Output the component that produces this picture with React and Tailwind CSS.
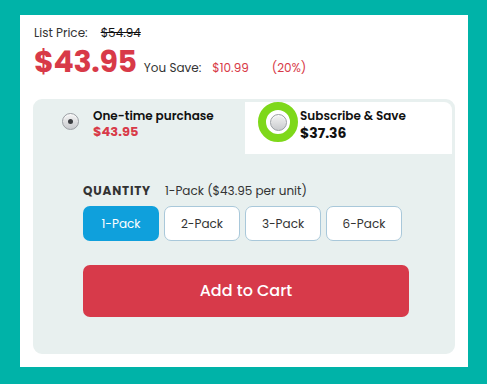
import React from 'react';

const font = { fontFamily: 'Poppins, Inter, "Noto Sans", sans-serif' };

function Radio({ checked }) {
  return (
    <div className="w-[17px] h-[17px] rounded-full border border-[#9a9ea3] bg-gradient-to-b from-[#f4f4f4] to-[#c9cbce] flex items-center justify-center shadow-[inset_0_1px_1px_rgba(255,255,255,0.8)]">
      {checked && <div className="w-[5px] h-[5px] rounded-full bg-[#3a3d40]" />}
    </div>
  );
}

export default function App() {
  const packs = ['1-Pack', '2-Pack', '3-Pack', '6-Pack'];

  return (
    <div className="w-full h-[384px] bg-[#00b3a8] pt-[15px] pl-[20px]" style={font}>
      <div className="w-[448px] h-[352px] bg-white px-[13px] pt-[10px]">
        {/* Price header */}
        <div className="pl-[1px]">
          <div className="flex items-center gap-[13px] text-[12px] text-[#333] h-[16px] leading-[16px]">
            <span>List Price:</span>
            <span className="line-through text-[#111]">$54.94</span>
          </div>
          <div className="flex items-baseline mt-[2px] h-[38px]">
            <span className="text-[30px] font-bold text-[#d83a48] leading-[38px] tracking-[-0.3px]">$43.95</span>
            <span className="ml-[7px] text-[12px] text-[#333] leading-[16px]">You Save:</span>
            <span className="ml-[11px] text-[12px] text-[#d83a48] leading-[16px]">$10.99</span>
            <span className="ml-[23px] text-[12px] text-[#d83a48] leading-[16px]">(20%)</span>
          </div>
        </div>

        {/* Purchase panel */}
        <div className="mt-[18px] h-[255px] rounded-[9px] border-[3px] border-[#e8f0ef] bg-[#e8f0ef]">
          <div className="flex h-[52px]">
            <div className="w-[209px] flex items-start pl-[26px] pt-[6px] gap-[14px]">
              <div className="mt-[5px]">
                <Radio checked />
              </div>
              <div className="flex flex-col">
                <span className="text-[12px] font-semibold text-[#111] leading-[16px]">One-time purchase</span>
                <span className="text-[13px] font-bold text-[#d83a48] leading-[16px]">$43.95</span>
              </div>
            </div>
            <div className="flex-1 bg-white rounded-tr-[8px] flex items-start pl-[13px] gap-[2px]">
              <div className="w-[40px] h-[40px] rounded-full border-[8px] border-[#7ed81a] bg-white flex items-center justify-center">
                <Radio />
              </div>
              <div className="pt-[6px] flex flex-col">
                <span className="text-[12px] font-semibold text-[#111] leading-[16px]">Subscribe &amp; Save</span>
                <span className="text-[14px] font-bold text-[#111] leading-[18px]">$37.36</span>
              </div>
            </div>
          </div>

          <div className="pl-[47px] pt-[30px]">
            <div className="flex items-center gap-[14px] h-[14px]">
              <span className="text-[12px] font-bold tracking-[0.8px] text-[#333]">QUANTITY</span>
              <span className="text-[12px] text-[#333]">1-Pack ($43.95 per unit)</span>
            </div>
            <div className="flex gap-[5px] mt-[8px]">
              {packs.map((p, i) => (
                <div
                  key={p}
                  className={
                    i === 0
                      ? 'w-[76px] h-[35px] rounded-[7px] bg-[#0fa0dc] text-white text-[12px] flex items-center justify-center'
                      : 'w-[76px] h-[35px] rounded-[7px] bg-white border border-[#a9c8da] text-[#333] text-[12px] flex items-center justify-center'
                  }
                >
                  {p}
                </div>
              ))}
            </div>
            <button className="mt-[24px] w-[326px] h-[52px] rounded-[7px] bg-[#d73a4a] text-white text-[16px] font-medium">
              Add to Cart
            </button>
          </div>
        </div>
      </div>
    </div>
  );
}
